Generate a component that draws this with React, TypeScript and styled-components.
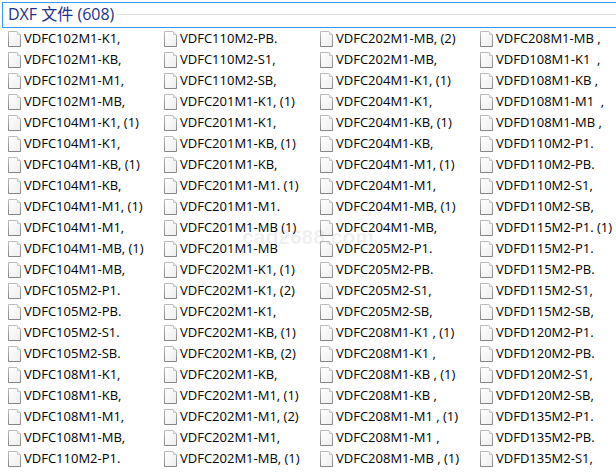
import React from "react";
import styled, { createGlobalStyle } from "styled-components";

const GlobalStyle = createGlobalStyle`
  * { box-sizing: border-box; }
  body {
    margin: 0;
    background: #fff;
    overflow-x: hidden;
    font-family: "Open Sans", "Noto Sans CJK SC", sans-serif;
  }
`;

const columns: string[][] = [
  [
    "VDFC102M1-K1,", "VDFC102M1-KB,", "VDFC102M1-M1,", "VDFC102M1-MB,",
    "VDFC104M1-K1, (1)", "VDFC104M1-K1,", "VDFC104M1-KB, (1)", "VDFC104M1-KB,",
    "VDFC104M1-M1, (1)", "VDFC104M1-M1,", "VDFC104M1-MB, (1)", "VDFC104M1-MB,",
    "VDFC105M2-P1.", "VDFC105M2-PB.", "VDFC105M2-S1.", "VDFC105M2-SB.",
    "VDFC108M1-K1,", "VDFC108M1-KB,", "VDFC108M1-M1,", "VDFC108M1-MB,",
    "VDFC110M2-P1.",
  ],
  [
    "VDFC110M2-PB.", "VDFC110M2-S1,", "VDFC110M2-SB,", "VDFC201M1-K1, (1)",
    "VDFC201M1-K1,", "VDFC201M1-KB, (1)", "VDFC201M1-KB,", "VDFC201M1-M1. (1)",
    "VDFC201M1-M1.", "VDFC201M1-MB (1)", "VDFC201M1-MB", "VDFC202M1-K1, (1)",
    "VDFC202M1-K1, (2)", "VDFC202M1-K1,", "VDFC202M1-KB, (1)", "VDFC202M1-KB, (2)",
    "VDFC202M1-KB,", "VDFC202M1-M1, (1)", "VDFC202M1-M1, (2)", "VDFC202M1-M1,",
    "VDFC202M1-MB, (1)",
  ],
  [
    "VDFC202M1-MB, (2)", "VDFC202M1-MB,", "VDFC204M1-K1, (1)", "VDFC204M1-K1,",
    "VDFC204M1-KB, (1)", "VDFC204M1-KB,", "VDFC204M1-M1, (1)", "VDFC204M1-M1,",
    "VDFC204M1-MB, (1)", "VDFC204M1-MB,", "VDFC205M2-P1.", "VDFC205M2-PB.",
    "VDFC205M2-S1,", "VDFC205M2-SB,", "VDFC208M1-K1 , (1)", "VDFC208M1-K1 ,",
    "VDFC208M1-KB , (1)", "VDFC208M1-KB ,", "VDFC208M1-M1 , (1)", "VDFC208M1-M1 ,",
    "VDFC208M1-MB , (1)",
  ],
  [
    "VDFC208M1-MB ,", "VDFD108M1-K1  ,", "VDFD108M1-KB ,", "VDFD108M1-M1  ,",
    "VDFD108M1-MB ,", "VDFD110M2-P1.", "VDFD110M2-PB.", "VDFD110M2-S1,",
    "VDFD110M2-SB,", "VDFD115M2-P1. (1)", "VDFD115M2-P1.", "VDFD115M2-PB.",
    "VDFD115M2-S1,", "VDFD115M2-SB,", "VDFD120M2-P1.", "VDFD120M2-PB.",
    "VDFD120M2-S1,", "VDFD120M2-SB,", "VDFD135M2-P1.", "VDFD135M2-PB.",
    "VDFD135M2-S1,",
  ],
];

const Page = styled.main`
  position: relative;
  padding: 2px 0 3px 2px;
`;

const GroupTitle = styled.h2`
  margin: 0;
  font: inherit;
`;

const GroupHeader = styled.button`
  display: flex;
  align-items: center;
  gap: 3px;
  width: 100%;
  height: 26px;
  padding: 0 0 2px 5px;
  border: 1px solid #3399ff;
  border-right: 0;
  background: #fff;
  color: #1e3287;
  font-family: inherit;
  font-size: 16px;
  line-height: 20px;
  text-align: left;
  white-space: nowrap;
`;

const Rule = styled.span`
  flex: 1;
  height: 1px;
  background: #e2e2e2;
`;

const FileGrid = styled.div`
  display: grid;
  grid-template-columns: 156fr 156fr 160fr 136fr;
  padding-left: 6px;
`;

const FileColumn = styled.ul`
  min-width: 0;
  margin: 0;
  padding: 0;
  list-style: none;
`;

const FileItem = styled.button`
  display: flex;
  align-items: center;
  gap: 3px;
  height: 21px;
  padding: 0;
  border: 0;
  background: none;
  color: #000;
  font-family: inherit;
  font-size: 13px;
  line-height: 21px;
  white-space: pre;
`;

const IconSvg = styled.svg`
  display: block;
  flex: none;
`;

const Watermark = styled.span`
  position: absolute;
  top: 225px;
  left: 0;
  right: 0;
  text-align: center;
  color: rgba(0, 0, 0, 0.08);
  font-family: "Liberation Sans", sans-serif;
  font-size: 21px;
  font-weight: 700;
  line-height: 24px;
  pointer-events: none;
`;

const FileIcon = () => (
  <IconSvg width="13" height="16" viewBox="0 0 13 16" aria-hidden="true">
    <defs>
      <linearGradient id="paper" x1="0" y1="0" x2="1" y2="1">
        <stop offset="0" stopColor="#ffffff" />
        <stop offset="1" stopColor="#eeeeee" />
      </linearGradient>
      <linearGradient id="edge" x1="0" y1="0" x2="0" y2="1">
        <stop offset="0" stopColor="#bcbcbc" />
        <stop offset="1" stopColor="#858585" />
      </linearGradient>
    </defs>
    <path d="M.5.5H9L12.5 4V15.5H.5Z" fill="url(#paper)" stroke="url(#edge)" />
    <path d="M9.5 1V3.5H12" fill="#f4f4f4" stroke="#c4c4c4" />
  </IconSvg>
);

export default function App() {
  return (
    <>
      <GlobalStyle />
      <Page>
        <GroupTitle>
          <GroupHeader type="button" aria-expanded="true">
            DXF 文件 (608)
            <Rule />
          </GroupHeader>
        </GroupTitle>
        <FileGrid>
          {columns.map((files) => (
            <FileColumn key={files[0]}>
              {files.map((name) => (
                <li key={name}>
                  <FileItem type="button">
                    <FileIcon />
                    {name}
                  </FileItem>
                </li>
              ))}
            </FileColumn>
          ))}
        </FileGrid>
        <Watermark>cad2688.com</Watermark>
      </Page>
    </>
  );
}
